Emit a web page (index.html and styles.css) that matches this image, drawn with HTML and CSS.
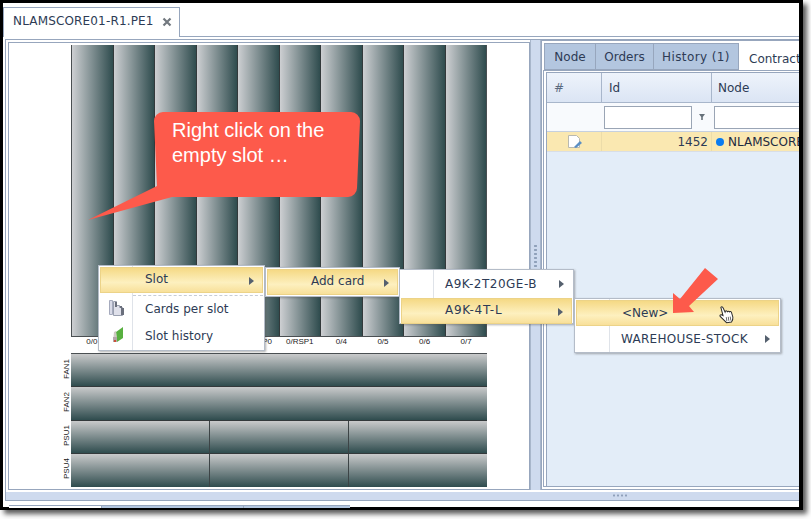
FILE: index.html
```html
<!DOCTYPE html>
<html lang="en">
<head>
<meta charset="utf-8">
<title>Slot menu</title>
<link rel="stylesheet" href="styles.css">
</head>
<body>
<div class="screen">
  <div class="tabbar">
    <div class="doc-tab"><span class="doc-name">NLAMSCORE01-R1.PE1</span>
      <svg class="close" width="10" height="10" viewBox="0 0 10 10"><path d="M1.500 1.500l7 7M8.500 1.500l-7 7" stroke="#72787f" stroke-width="2.200"/></svg>
    </div>
  </div>
  <div class="frame">
    <div class="panes">
      <div class="left-pane">
        <div class="chassis">
          <div class="slots">
            <div class="slot"></div><div class="slot"></div><div class="slot"></div><div class="slot"></div><div class="slot"></div>
            <div class="slot"></div><div class="slot"></div><div class="slot"></div><div class="slot"></div><div class="slot"></div>
          </div>
          <div class="slot-labels">
            <span>0/0</span><span></span><span></span><span></span><span>0/RSP0</span>
            <span>0/RSP1</span><span>0/4</span><span>0/5</span><span>0/6</span><span>0/7</span>
          </div>
          <div class="units">
            <div class="unit-row"><span class="unit-label">FAN1</span><div class="unit-bars"><div class="bar"></div></div></div>
            <div class="unit-row"><span class="unit-label">FAN2</span><div class="unit-bars"><div class="bar"></div></div></div>
            <div class="unit-row"><span class="unit-label">PSU1</span><div class="unit-bars"><div class="bar"></div><div class="bar"></div><div class="bar"></div></div></div>
            <div class="unit-row"><span class="unit-label">PSU4</span><div class="unit-bars"><div class="bar"></div><div class="bar"></div><div class="bar"></div></div></div>
          </div>
        </div>
      </div>
      <div class="splitter"><span class="grip-v"></span></div>
      <div class="right-pane">
        <div class="subtabs">
          <div class="subtab t-node">Node</div>
          <div class="subtab t-orders">Orders</div>
          <div class="subtab t-history">History (1)</div>
          <div class="subtab active">Contracts</div>
        </div>
        <div class="tabbody">
          <div class="grid">
            <div class="grid-row head">
              <div class="c c1">#</div><div class="c c2">Id</div><div class="c c3">Node</div>
            </div>
            <div class="grid-row filter">
              <div class="c c1"></div>
              <div class="c c2"><span class="input"></span>
                <svg class="funnel" width="10" height="10" viewBox="0 0 10 10"><path d="M2 2h6L5.800 5v3H4.200V5z" fill="#66717a"/></svg>
              </div>
              <div class="c c3"><span class="input wide"></span></div>
            </div>
            <div class="grid-row data">
              <div class="c c1">
                <svg width="18" height="16" viewBox="0 0 18 16"><path d="M2.500 1.500h8l3 3v9h-11z" fill="#fff" stroke="#b9b9b0"/><path d="M8 13l6-6 2 2-6 5z" fill="#5b8fc4"/></svg>
              </div>
              <div class="c c2 num">1452</div>
              <div class="c c3"><i class="dot"></i>NLAMSCORE01-R1.PE1</div>
            </div>
          </div>
        </div>
      </div>
    </div>
    <div class="hbar"><span class="grip-h"></span></div>
  </div>
  <div class="bottom-tabs">
    <div class="bt white"></div><div class="bt blue1"></div><div class="bt blue2"></div>
  </div>

  <svg class="callout" width="290" height="125" viewBox="0 0 290 125">
    <path d="M78 5H266a9 9 0 0 1 9 9L272 81a9 9 0 0 1-9 9H87L3 113 72 79 69 14a9 9 0 0 1 9-9z" fill="#fd5a4b"/>
  </svg>
  <div class="callout-text">Right click on the<br>empty slot …</div>

  <div class="menu m1">
    <div class="mi hot"><span class="label">Slot</span><i class="tri"></i></div>
    <div class="msep"></div>
    <div class="mi"><span class="ico">
      <svg width="20" height="18" viewBox="0 0 20 18"><path d="M2.500 1.500h3v14h-3z" fill="#d9dbe8" stroke="#a5aabd"/><path d="M6.500 2.500h3v4h3v2h3v8h-9z" fill="#dfe0ea" stroke="#9aa0b0"/><path d="M8 3h2v5H8zM13 7h2v2h-2zM14 9h3v7h-3z" fill="#6a6f7c"/></svg>
    </span><span class="label">Cards per slot</span></div>
    <div class="mi"><span class="ico">
      <svg width="20" height="18" viewBox="0 0 20 18"><path d="M9 6l7-5v11l-6 4z" fill="#58b040"/><path d="M7 6l2-1 1 11H6z" fill="#cfc9c4"/><path d="M6 11h4v5H6z" fill="#b3a6aa"/><path d="M7 14h2v2H7z" fill="#c9503a"/></svg>
    </span><span class="label">Slot history</span></div>
  </div>

  <div class="menu m2">
    <div class="mi hot"><span class="label">Add card</span><i class="tri"></i></div>
  </div>

  <div class="menu m3">
    <div class="mi"><span class="label code">A9K-2T20GE-B</span><i class="tri"></i></div>
    <div class="mi hot"><span class="label code2">A9K-4T-L</span><i class="tri"></i></div>
  </div>

  <div class="menu m4">
    <div class="mi hot"><span class="label">&lt;New&gt;</span></div>
    <div class="mi"><span class="label stock">WAREHOUSE-STOCK</span><i class="tri"></i></div>
  </div>

  <svg class="arrow" width="60" height="60" viewBox="0 0 60 60">
    <path d="M2 28 9 34 34 3 47 14 18 41 23 47 2 48z" fill="#fd5a4b"/>
  </svg>

  <svg class="hand" width="18" height="20" viewBox="0 0 18 20">
    <path d="M4 1.500c1-.8 2 0 2.200 1L7.500 7l.5-1c1-.5 1.700 0 1.800.7.700-.6 1.700-.4 2 .5.800-.5 1.800-.2 2 .8l.7 5c0 2-1 3.500-2 4.500H7.500L2 10.500c-.5-1 .5-2 1.500-1.500l1.500 1z" fill="#fff" stroke="#2b2b2b" stroke-width="1"/>
    <path d="M8 12v4M10 12v4M12 12v4" stroke="#555" stroke-width=".8"/>
  </svg>
</div>
</body>
</html>
```
FILE: styles.css
```css
* { box-sizing: border-box; }
html, body { margin: 0; padding: 0; background: #fff; }
body { width: 811px; height: 519px; overflow: hidden; font-family: "DejaVu Sans", sans-serif; font-size: 12px; color: #2d3b55; }

.screen {
  position: relative;
  width: 803px;
  height: 510px;
  border-style: solid;
  border-color: #000;
  border-width: 3px 4px 3px 3px;
  background: #fff;
  box-shadow: 4px 4px 5px #5c5c5c;
  display: flex;
  flex-direction: column;
}

.tabbar { height: 34px; flex: none; padding-top: 4px; border-bottom: 1px solid #97a6bd; }
.doc-tab {
  width: 177px; height: 30px;
  border: 1px solid #97a6bd; border-bottom: 0;
  background: #fff;
  display: flex; align-items: center; padding: 0 0 3px 9px;
  font-size: 12px; color: #2d3b55;
  margin-bottom: -1px; position: relative;
}
.doc-name { letter-spacing: .16px; }
.close { margin-left: 8px; margin-top: 1px; }

.frame {
  margin: 2px 0 0 2px;
  border: 1px solid #97a6bd; border-right: 0;
  height: 462px;
  flex: none;
  display: flex; flex-direction: column;
}
.panes { flex: none; height: 452px; display: flex; padding: 2px 0 0 2px; }

.left-pane { width: 522px; height: 448px; border: 1px solid #97a6bd; background: #fff; padding: 2px 0 0 62px; flex: none; }
.chassis { width: 416px; }
.slots { display: flex; height: 292px; border: 1px solid #4a4f52; border-width: 0 1px 1px 1px; }
.slot { flex: 1; background: linear-gradient(90deg, #cdcfd2 0%, #2f4c4e 100%); border-right: 1px solid #33393b; }
.slot:last-child { border-right: 0; }
.slot-labels { display: flex; height: 16px; font-family: "Liberation Sans", sans-serif; font-size: 8px; line-height: 9px; color: #222; }
.slot-labels span { flex: 1; text-align: center; }
.units { display: flex; flex-direction: column; border-top: 1px solid #4a4f52; }
.unit-row { height: 33.250px; position: relative; }
.unit-label {
  position: absolute; left: -9px; top: -2px; height: 33px; width: 10px;
  writing-mode: vertical-rl; transform: rotate(180deg);
  font-family: "Liberation Sans", sans-serif; font-size: 8px; text-align: center; line-height: 10px; color: #222;
}
.unit-bars { display: flex; height: 100%; }
.bar { flex: 1; background: linear-gradient(180deg, #c9cacb 0%, #2f4c4e 100%); border-bottom: 1px solid #33393b; border-right: 1px solid #3c4446; }
.bar:last-child { border-right: 0; }
.unit-row:last-child .bar { border-bottom: 0; }

.splitter { flex: none; width: 11px; height: 450px; margin-top: -2px; background: #cedaee; border: 1px solid #a8b6cb; border-width: 0 1px 0 1px; position: relative; }
.grip-v { position: absolute; left: 3px; top: 204px; width: 3px; height: 26px; background: radial-gradient(circle, #8fa0ba 1.100px, transparent 1.300px) 0 0 / 3px 4px; }

.right-pane { flex: none; width: 258px; height: 450px; margin-top: -2px; border: 1px solid #97a6bd; border-right: 0; padding: 2px 0 0 2px; overflow: hidden; }
.subtabs { display: flex; height: 27px; position: relative; z-index: 1; }
.subtab { height: 27px; padding-top: 6px; text-align: center; background: #b3c6df; border: 1px solid #97a6bd; border-left-width: 0; color: #2d3b55; flex: none; }
.t-node { width: 52px; border-left-width: 1px; }
.t-orders { width: 58px; }
.t-history { width: 85px; letter-spacing: .4px; }
.subtab.active { width: 80px; background: #fff; border: 0; padding-top: 9px; text-align: left; padding-left: 10px; }

.tabbody { height: 417px; margin-left: -1px; border: 1px solid #97a6bd; border-right: 0; padding: 1px 0 0 2px; background: #fff; }
.grid { height: 414px; border: 1px solid #97a6bd; border-right: 0; border-bottom: 0; background: #e3edf8; }
.grid-row { display: flex; }
.c { flex: none; display: flex; align-items: center; white-space: nowrap; }
.c1 { width: 55px; }
.c2 { width: 110px; }
.c3 { width: 120px; overflow: hidden; }
.head { height: 30px; background: linear-gradient(180deg, #eef3fb, #dbe5f4); border-bottom: 1px solid #a8b6cb; }
.head .c { padding-left: 6px; height: 100%; border-right: 1px solid #a8b6cb; }
.head .c1 { padding-left: 7px; color: #5b6a80; }
.head .c2 { padding-left: 7px; }
.filter { height: 29px; background: #f8fafd; border-bottom: 1px solid #c6d0de; }
.filter .c2 { padding-left: 2px; position: relative; }
.filter .c3 { padding-left: 2px; }
.input { display: block; width: 88px; height: 23px; background: #fff; border: 1px solid #9aa5b5; }
.input.wide { width: 120px; }
.funnel { margin-left: 5px; }
.data { height: 20px; background: #fae8b1; border-bottom: 1px solid #d8dee6; }
.data .c1 { justify-content: center; padding-left: 1px; border-right: 1px solid #ecdca9; height: 100%; }
.data .c2 { justify-content: flex-end; padding-right: 3px; height: 100%; border-right: 1px solid #ecdca9; }
.data .c3 { padding-left: 4px; height: 100%; color: #1e2a40; }
.dot { width: 8px; height: 8px; border-radius: 50%; background: #0a7bf0; margin-right: 4px; flex: none; }

.hbar { flex: none; height: 9px; background: #cedaee; border-bottom: 1px solid #97a6bd; position: relative; }
.grip-h { position: absolute; left: 606px; top: 2px; width: 16px; height: 3px; background: radial-gradient(circle, #8fa0ba 1px, transparent 1.200px) 0 0 / 4px 3px; }

.bottom-tabs { display: flex; flex: none; height: 3px; margin: 4px 0 0 6px; overflow: hidden; }
.bt { height: 3px; border-top: 1px solid #97a6bd; }
.white { width: 92px; background: #fff; }
.blue1 { width: 142px; background: #b3c6df; border-left: 1px solid #97a6bd; }
.blue2 { width: 107px; background: #b3c6df; border-left: 1px solid #97a6bd; }

.callout { position: absolute; left: 82px; top: 104px; }
.callout-text { position: absolute; left: 169px; top: 115px; font-family: "Liberation Sans", sans-serif; font-size: 20px; line-height: 25px; color: #fff; }

.menu { position: absolute; background: #fff; border: 1px solid #b4bcc8; box-shadow: 1px 1px 2px rgba(80,80,80,.45); padding: 1px; }
.mi { display: flex; align-items: center; position: relative; height: 27px; }
.label { position: absolute; top: 6px; white-space: nowrap; }
.hot { background: linear-gradient(180deg, #f5d985 0%, #fdf0bf 60%, #f8e09a 100%); border: 1px solid #ecd388; height: 26px; z-index: 1; }
.hot .label { top: 4px; }
.tri { position: absolute; right: 8px; top: 9px; width: 0; height: 0; border-left: 5px solid #55606e; border-top: 4px solid transparent; border-bottom: 4px solid transparent; }
.ico { position: absolute; left: 7px; top: 4px; }
.msep { height: 1px; margin: 2px 0 0 33px; border-top: 1px dashed #c6ccd6; }
.code { letter-spacing: .5px; }
.code2 { letter-spacing: .7px; }
.stock { letter-spacing: .27px; }

.m1 { left: 95px; top: 262px; width: 167px; height: 86px; background: linear-gradient(90deg, #fff 33px, #dfe3e9 33px, #dfe3e9 34px, #fff 34px); }
.m1 .label { left: 45px; top: 7px; }
.m1 .hot .label { left: 44px; top: 4px; }
.m1 .msep + .mi { margin-top: -1px; }

.m2 { left: 262px; top: 264px; width: 135px; height: 30px; }
.m2 .label { left: 43px; }

.m3 { left: 396px; top: 266px; width: 175px; height: 55px; background: linear-gradient(90deg, #fff 33px, #dfe3e9 33px, #dfe3e9 34px, #fff 34px); }
.m3 .label { left: 44px; }
.m3 .hot .label { left: 43px; }

.m4 { left: 571px; top: 295px; width: 207px; height: 55px; background: linear-gradient(90deg, #fff 34px, #dfe3e9 34px, #dfe3e9 35px, #fff 35px); }
.m4 .label { left: 45px; }
.m4 .hot .label { top: 5px; }
.m4 .tri { right: 9px; }

.arrow { position: absolute; left: 668px; top: 262px; z-index: 2; }
.hand { position: absolute; left: 715px; top: 302px; z-index: 3; transform: rotate(-8deg); }
```
